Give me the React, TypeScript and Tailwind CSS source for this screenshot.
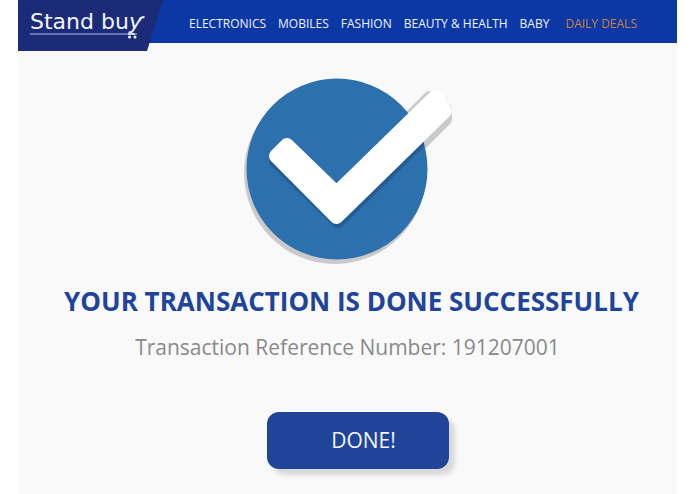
const navLinks = [
  { label: "ELECTRONICS", href: "#electronics" },
  { label: "MOBILES", href: "#mobiles" },
  { label: "FASHION", href: "#fashion" },
  { label: "BEAUTY & HEALTH", href: "#beauty-health" },
  { label: "BABY", href: "#baby" },
];

function Logo() {
  return (
    <a
      href="#home"
      className="h-[51px] w-[145px] shrink-0 bg-[#1b2b78] pl-3 pt-2 text-[#f2f5fc] [clip-path:polygon(0_0,100%_0,129px_100%,0_100%)]"
    >
      <span className="relative block w-[116px] font-['DejaVu_Sans',sans-serif] text-[22px] leading-7 whitespace-nowrap">
        Stand bu<span className="italic">y</span>
        {/* Cart: handle, rail and wheels */}
        <svg className="absolute left-0 top-0" width="118" height="32" viewBox="0 0 118 32" fill="none" aria-hidden="true">
          <path d="M0 26h107" stroke="#7f8cc0" strokeWidth="1.5" />
          <path d="M98 26h7" stroke="currentColor" strokeWidth="1.5" />
          <path d="M109.5 13c.5-2.800 1.500-4 5-4" stroke="currentColor" strokeWidth="1.8" />
          <circle cx="99.5" cy="29" r="1.5" fill="currentColor" />
          <circle cx="105" cy="29" r="1.5" fill="currentColor" />
        </svg>
      </span>
    </a>
  );
}

function SuccessMark() {
  return (
    <svg width="210" height="188" viewBox="0 0 210 188" fill="none" aria-hidden="true">
      <defs>
        <clipPath id="disc">
          <circle cx="93" cy="92" r="90.5" />
        </clipPath>
      </defs>
      <circle cx="91" cy="96" r="91" fill="#cbcaca" />
      <g strokeLinejoin="round" strokeWidth="14">
        <path d="M186 21L201 33V42L170 73L150 57Z" fill="#cbcaca" stroke="#cbcaca" />
        <circle cx="93" cy="92" r="90.5" fill="#2c70ae" />
        <path
          d="M43 73L32 84L94 144L197 43L187 29L92.5 122Z"
          fill="#255c93"
          stroke="#255c93"
          clipPath="url(#disc)"
        />
        <path d="M43 68L32 79L92.5 140L201 34L191 20L92.5 116Z" fill="#fff" stroke="#fff" />
      </g>
    </svg>
  );
}

export default function App() {
  return (
    <div className="min-h-screen bg-white px-[18px] font-['Open_Sans','Noto_Sans',sans-serif]">
      <div className="min-h-screen bg-[#f9f9f9]">
        <header className="flex h-[43px] items-start bg-[#0c38a6]">
          <Logo />
          <nav className="ml-[26px] flex h-full items-center gap-3 pt-1 text-[12px] leading-4 whitespace-nowrap text-[#edf2fc]">
            {navLinks.map((link) => (
              <a key={link.label} href={link.href}>
                {link.label}
              </a>
            ))}
            <a href="#deals" className="ml-1 text-[#c8813f]">
              DAILY DEALS
            </a>
          </nav>
        </header>

        <main className="flex flex-col items-center pt-[34px] pb-6 text-center">
          <div className="pl-0.5">
            <SuccessMark />
          </div>
          <h1 className="mt-[18px] pl-2 text-[26px] leading-9 font-bold text-[#20449a]">
            YOUR TRANSACTION IS DONE SUCCESSFULLY
          </h1>
          <p className="mt-3 text-[21px] leading-8 text-[#8a8a8a]">
            Transaction Reference Number: 191207001
          </p>
          <div className="mt-[49px] pl-5">
            <button
              type="button"
              className="h-[57px] w-[182px] rounded-xl bg-[#204498] pl-3 text-[21px] text-[#f2f5fc] shadow-[6px_6px_4px_#d9d9d9]"
            >
              DONE!
            </button>
          </div>
        </main>
      </div>
    </div>
  );
}
